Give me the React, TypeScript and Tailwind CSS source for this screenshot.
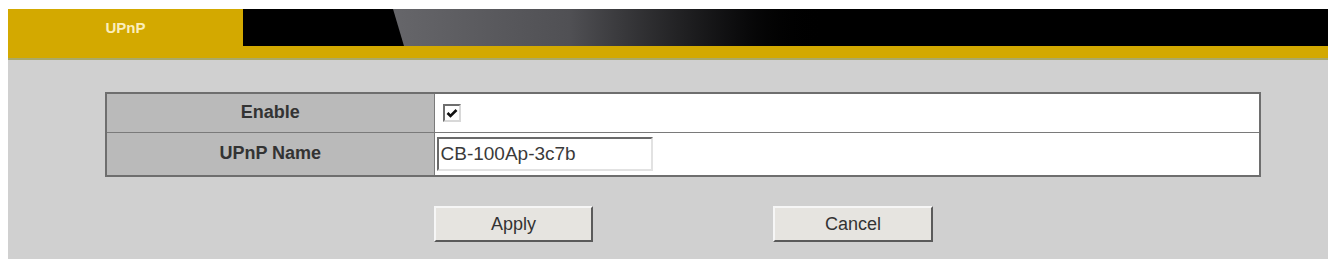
export default function App() {
  return (
    <div className="h-[259px] w-full bg-white pt-[9px] pl-[8px] pr-[4px] font-['Liberation_Sans',Arial,sans-serif]">
      <div className="flex h-[250px] flex-col bg-[#d0d0d0]">
        {/* title bar */}
        <div className="relative h-[51px] shrink-0 bg-[#d3a900]">
          <div className="absolute left-0 top-0 flex h-[38px] w-[235px] items-center justify-center">
            <span className="text-[15px] font-bold text-[#fbeebb]">UPnP</span>
          </div>
          <div className="absolute left-[235px] right-0 top-0 h-[37px] overflow-hidden bg-black">
            <div
              className="absolute top-0 h-full w-[440px] bg-gradient-to-r from-[#66666a] via-[#505054] via-40% to-black"
              style={{ left: 150, clipPath: 'polygon(0 0, 100% 0, 100% 100%, 11px 100%)' }}
            />
          </div>
          <div className="absolute bottom-0 left-0 right-0 h-[2px] bg-[#a9a86a]" />
        </div>

        <div className="px-[97px] pt-[32px]">
          <table className="w-[1156px] border-collapse border-2 border-[#6e6e6e]">
            <tbody>
              <tr className="h-[39px]">
                <td className="w-[328px] border border-[#7a7a7a] bg-[#bababa] text-center text-[18px] font-bold text-[#333]">Enable</td>
                <td className="border border-[#7a7a7a] bg-white px-[8px]">
                  <div className="flex h-[18px] w-[18px] items-center justify-center border-2 border-t-[#6e6e6e] border-l-[#6e6e6e] border-b-[#d8d8d8] border-r-[#d8d8d8] bg-white">
                    <svg width="12" height="10" viewBox="0 0 12 10">
                      <path d="M1.5 5 L4.5 8 L10.5 2" fill="none" stroke="#111" strokeWidth="2.6" />
                    </svg>
                  </div>
                </td>
              </tr>
              <tr className="h-[44px]">
                <td className="border border-[#7a7a7a] bg-[#bababa] text-center text-[18px] font-bold text-[#333]">UPnP Name</td>
                <td className="border border-[#7a7a7a] bg-white px-[2px]">
                  <div className="flex h-[34px] w-[216px] items-center border-2 border-t-[#6a6a6a] border-l-[#6a6a6a] border-b-[#e2e2e2] border-r-[#e2e2e2] bg-white px-[2px] text-[19px] text-[#3a3a3a]">
                    CB-100Ap-3c7b
                  </div>
                </td>
              </tr>
            </tbody>
          </table>
        </div>

        <div className="flex pt-[29px]">
          <div className="ml-[426px] flex h-[36px] w-[159px] items-center justify-center border-2 border-t-[#f6f6f6] border-l-[#f6f6f6] border-b-[#5a5a5a] border-r-[#5a5a5a] bg-[#e6e4e0] text-[18px] text-[#333]">
            Apply
          </div>
          <div className="ml-[180px] flex h-[36px] w-[160px] items-center justify-center border-2 border-t-[#f6f6f6] border-l-[#f6f6f6] border-b-[#5a5a5a] border-r-[#5a5a5a] bg-[#e6e4e0] text-[18px] text-[#333]">
            Cancel
          </div>
        </div>
      </div>
    </div>
  );
}
